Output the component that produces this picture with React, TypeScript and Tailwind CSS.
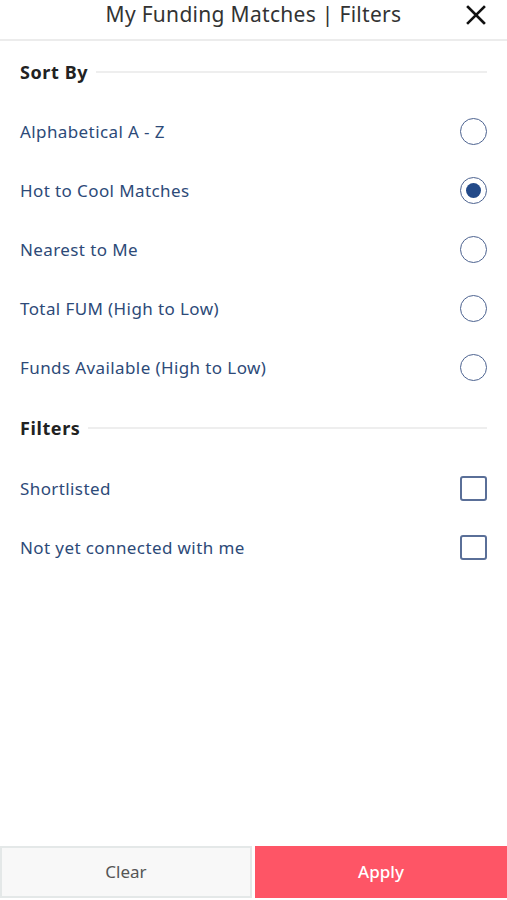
import React, { useState } from 'react';

const sortOptions = [
  'Alphabetical A - Z',
  'Hot to Cool Matches',
  'Nearest to Me',
  'Total FUM (High to Low)',
  'Funds Available (High to Low)',
];

const filterOptions = ['Shortlisted', 'Not yet connected with me'];

const SectionHeading: React.FC<{ title: string }> = ({ title }) => (
  <div className="flex items-center gap-2 h-[20px]">
    <span className="text-[18px] font-bold text-[#222] leading-none tracking-[0.6px]">{title}</span>
    <div className="flex-1 h-[2px] bg-[#eeeeee]" />
  </div>
);

export default function App() {
  const [sort, setSort] = useState(1);
  const [checked, setChecked] = useState<boolean[]>([false, false]);

  return (
    <div
      className="w-[507px] h-[900px] bg-white flex flex-col"
      style={{ fontFamily: '"Noto Sans", Lato, sans-serif' }}
    >
      {/* Header */}
      <div className="relative h-[41px] flex items-center justify-center border-b-2 border-[#ececec]">
        <span className="text-[21px] text-[#333] leading-none tracking-[0.3px] -mt-[10px]">My Funding Matches | Filters</span>
        <button className="absolute right-[19px] top-[3px] w-[24px] h-[24px] flex items-center justify-center">
          <svg width="22" height="22" viewBox="0 0 22 22" fill="none" stroke="#111" strokeWidth="2.6" strokeLinecap="square">
            <path d="M3 3 L19 19 M19 3 L3 19" />
          </svg>
        </button>
      </div>

      <div className="flex-1 px-[20px] pt-[21px]">
        <SectionHeading title="Sort By" />

        <div className="flex flex-col mt-[20px]">
          {sortOptions.map((label, i) => (
            <button
              key={label}
              onClick={() => setSort(i)}
              className="h-[59px] flex items-center justify-between text-left"
            >
              <span className="text-[17px] tracking-[0.4px] text-[#2d4a78]">{label}</span>
              <span className="w-[27px] h-[27px] rounded-full border-[1.5px] border-[#4d6390] flex items-center justify-center">
                {sort === i && <span className="w-[15px] h-[15px] rounded-full bg-[#234a89]" />}
              </span>
            </button>
          ))}
        </div>

        <div className="mt-[21px]">
          <SectionHeading title="Filters" />
        </div>

        <div className="flex flex-col mt-[21px]">
          {filterOptions.map((label, i) => (
            <button
              key={label}
              onClick={() => setChecked(c => c.map((v, j) => (j === i ? !v : v)))}
              className="h-[59px] flex items-center justify-between text-left"
            >
              <span className="text-[17px] tracking-[0.4px] text-[#2d4a78]">{label}</span>
              <span className="w-[27px] h-[25px] rounded-[3px] border-2 border-[#5a6f98] flex items-center justify-center">
                {checked[i] && (
                  <svg width="16" height="16" viewBox="0 0 16 16" fill="none" stroke="#234a89" strokeWidth="2.4">
                    <path d="M3 8.5 L6.5 12 L13 4.5" />
                  </svg>
                )}
              </span>
            </button>
          ))}
        </div>
      </div>

      {/* Footer */}
      <div className="flex h-[52px] mb-[2px] gap-[3px]">
        <button className="w-[252px] bg-[#f8f8f8] border-2 border-[#e4e8e8] text-[17px] text-[#555]">Clear</button>
        <button className="flex-1 bg-[#fe5566] text-[17px] font-medium text-white">Apply</button>
      </div>
    </div>
  );
}
